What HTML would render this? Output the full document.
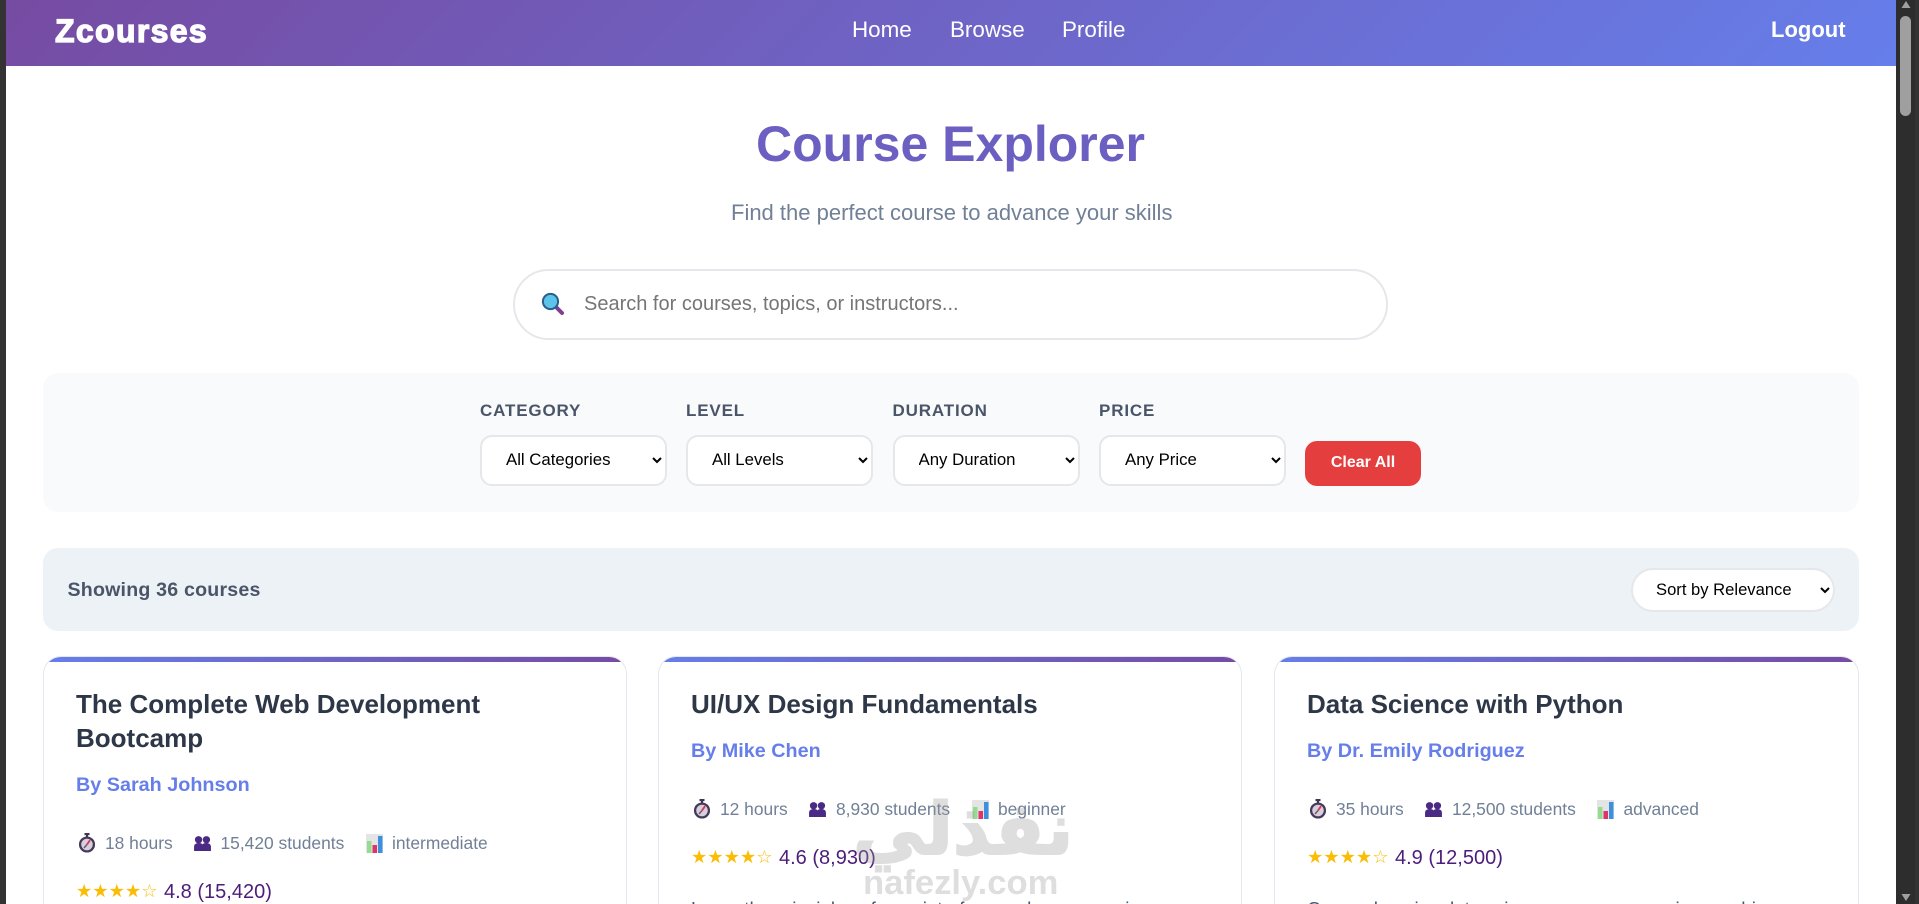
<!DOCTYPE html>
<html lang="en">
<head>
<meta charset="utf-8">
<title>Zcourses - Course Explorer</title>
<style>
html,body{margin:0;padding:0;width:1919px;height:904px;overflow:hidden;background:#fff}
*{box-sizing:border-box}
body{position:relative;font-family:"Liberation Sans",Arial,sans-serif}
.a{position:absolute;white-space:nowrap}
.bar{left:0;top:0;width:6px;height:904px;background:#333}
.track{left:1896px;top:0;width:23px;height:904px;background:#2d2d2d}
.thumb{left:1900px;top:16px;width:11px;height:100px;border-radius:6px;background:#9f9f9f}
header{position:absolute;left:6px;top:0;width:1890px;height:66px;background:linear-gradient(135deg,#764ba2 0%,#667eea 100%)}
.nav{color:#fff;font-size:22.4px;line-height:26px;top:17px}
h1{margin:0;left:756px;top:114px;font-size:50px;line-height:60px;font-weight:700;color:#6b5fc2}
.sub{left:731px;top:200px;font-size:22px;line-height:26px;color:#718096}
.search{left:513px;top:269px;width:875px;height:71px;border:2px solid #e5e7eb;border-radius:36px;background:#fff}
.search input{position:absolute;left:69px;top:0;width:780px;height:67px;border:0;outline:0;padding:0;background:transparent;font:20px "Liberation Sans",Arial,sans-serif;color:#000}
.search input::placeholder{color:#757575;opacity:1}
.panel{left:43px;top:373px;width:1816px;height:139px;background:#f8fafc;border-radius:15px}
.lbl{top:401px;font-size:17px;line-height:20px;font-weight:700;color:#4a5568;letter-spacing:.85px}
select{position:absolute;font:16.8px "Liberation Sans",Arial,sans-serif;color:#000;background:#fff;border:2px solid #e5e7eb;outline:0;padding:0 0 2px 20px;margin:0}
.f{top:435px;height:51px;width:187px;border-radius:12px}
.clear{left:1305px;top:441px;width:116px;height:45px;border:0;border-radius:12px;background:#e53e3e;color:#fff;font:700 16px "Liberation Sans",Arial,sans-serif;padding:0 0 2px}
.results{left:43px;top:548px;width:1816px;height:83px;background:#edf2f7;border-radius:15px}
.show{left:67.5px;top:578px;font-size:19.6px;line-height:24px;font-weight:700;color:#4a5568;letter-spacing:.2px}
.sort{left:1631px;top:568px;width:204px;height:44px;border-radius:22px;font-size:16.6px;padding:0 0 2px 19px}
.card{top:656px;width:584px;height:248px;background:#fff;border:1.5px solid #e2e8f0;border-bottom:0;border-radius:18px 18px 0 0;overflow:hidden}
.card:before{content:"";position:absolute;left:-2px;right:-2px;top:-2px;height:7px;background:linear-gradient(90deg,#667eea,#764ba2)}
.t{font-size:26px;line-height:34px;font-weight:700;color:#2d3748}
.by{font-size:19.8px;line-height:24px;font-weight:700;color:#667eea}
.m{font-size:17.4px;line-height:20px;color:#718096}
.st{font-family:"DejaVu Sans",sans-serif;font-size:18.2px;line-height:22px;color:#fbbc05}
.r{font-size:20px;line-height:24px;color:#4c1d7a}
.clip{top:894px;height:10px;width:520px;overflow:hidden}
.d{font-size:18.8px;line-height:30px;color:#4a5568}
svg{position:absolute;overflow:visible}
.wm{color:#9a9a9a;opacity:.32;font-weight:700}
</style>
</head>
<body>
<svg width="0" height="0" style="position:absolute"><defs>
<symbol id="sw" viewBox="0 0 16 20"><rect x="5.5" y="0" width="5" height="2.2" fill="#3f3550"/><rect x="7" y="1" width="2" height="3.5" fill="#3f3550"/><circle cx="8" cy="11.5" r="6.9" fill="#d9cfdc" stroke="#453a58" stroke-width="2.3"/><path d="M8 11.5L11 7.2" stroke="#d8365a" stroke-width="1.8"/><path d="M8 11.5L5 15" stroke="#6b5f78" stroke-width="1.6"/></symbol>
<symbol id="us" viewBox="0 0 18 16"><circle cx="4.8" cy="4" r="3.9" fill="#4a2a85"/><circle cx="13.2" cy="4" r="3.9" fill="#4a2a85"/><path d="M0 16V11.5C0 9 2 7.5 5 7.5c2 0 3.3.5 4 1.5.7-1 2-1.5 4-1.5 3 0 5 1.5 5 4V16z" fill="#4a2a85"/></symbol>
<symbol id="ch" viewBox="0 0 17 19"><rect width="17" height="19" fill="#e4e4e4"/><rect x="1" y="7" width="4.5" height="12" fill="#94dc8e"/><rect x="6.5" y="11" width="4.5" height="8" fill="#e0336b"/><rect x="12" y="2" width="4.5" height="17" fill="#3c90dd"/></symbol>
</defs></svg>

<div class="a bar"></div>
<div class="a track"></div>
<div class="a" style="left:1915px;top:0;width:4px;height:904px;background:#333"></div>
<div class="a thumb"></div>
<svg style="left:1901px;top:1px" width="10" height="8"><path d="M5 0L9.5 7H.5z" fill="#9f9f9f"/></svg>
<svg style="left:1901px;top:894px" width="10" height="8"><path d="M5 7L9.5 0H.5z" fill="#9f9f9f"/></svg>

<header></header>
<div class="a" style="left:55px;top:14px;color:#fff;font-size:32px;line-height:34px;font-weight:700;letter-spacing:1.35px;-webkit-text-stroke:1.3px #fff">Zcourses</div>
<div class="a nav" style="left:852px">Home</div>
<div class="a nav" style="left:950px">Browse</div>
<div class="a nav" style="left:1062px">Profile</div>
<div class="a nav" style="left:1771px;font-weight:700;font-size:22px">Logout</div>

<h1 class="a">Course Explorer</h1>
<div class="a sub">Find the perfect course to advance your skills</div>

<div class="a search"><input type="text" placeholder="Search for courses, topics, or instructors..."></div>
<svg style="left:541px;top:292px" width="25" height="24" viewBox="0 0 25 24"><path d="M15 15L21 21" stroke="#7f3f8f" stroke-width="4" stroke-linecap="round"/><circle cx="9.5" cy="9.5" r="7.6" fill="#5cc4ea" stroke="#2b5d8e" stroke-width="2"/></svg>

<div class="a panel"></div>
<div class="a lbl" style="left:480px">CATEGORY</div>
<div class="a lbl" style="left:686px">LEVEL</div>
<div class="a lbl" style="left:892.5px">DURATION</div>
<div class="a lbl" style="left:1099px">PRICE</div>
<select class="f" style="left:480px"><option>All Categories</option></select>
<select class="f" style="left:686px"><option>All Levels</option></select>
<select class="f" style="left:892.5px"><option>Any Duration</option></select>
<select class="f" style="left:1099px"><option>Any Price</option></select>
<button class="a clear">Clear All</button>

<div class="a results"></div>
<div class="a show">Showing 36 courses</div>
<select class="sort"><option>Sort by Relevance</option></select>

<!-- card 1 -->
<div class="a card" style="left:43px"></div>
<div class="a t" style="left:76px;top:687px">The Complete Web Development</div>
<div class="a t" style="left:76px;top:721px">Bootcamp</div>
<div class="a by" style="left:76px;top:773px">By Sarah Johnson</div>
<svg style="left:79px;top:833px" width="16" height="20"><use href="#sw"/></svg>
<div class="a m" style="left:105px;top:833px">18 hours</div>
<svg style="left:194px;top:836px" width="17" height="15"><use href="#us"/></svg>
<div class="a m" style="left:220.5px;top:833px">15,420 students</div>
<svg style="left:366px;top:834px" width="17" height="19"><use href="#ch"/></svg>
<div class="a m" style="left:392px;top:833px">intermediate</div>
<div class="a st" style="left:76px;top:881px">★★★★☆</div>
<div class="a r" style="left:164px;top:880px">4.8 (15,420)</div>

<!-- card 2 -->
<div class="a card" style="left:658px"></div>
<div class="a t" style="left:691px;top:687px">UI/UX Design Fundamentals</div>
<div class="a by" style="left:691px;top:739px">By Mike Chen</div>
<svg style="left:694px;top:799px" width="16" height="20"><use href="#sw"/></svg>
<div class="a m" style="left:720px;top:799px">12 hours</div>
<svg style="left:809px;top:802px" width="17" height="15"><use href="#us"/></svg>
<div class="a m" style="left:836px;top:799px">8,930 students</div>
<svg style="left:972px;top:800px" width="17" height="19"><use href="#ch"/></svg>
<div class="a m" style="left:998px;top:799px">beginner</div>
<div class="a st" style="left:691px;top:847px">★★★★☆</div>
<div class="a r" style="left:779px;top:846px">4.6 (8,930)</div>
<div class="a clip" style="left:691px"><div class="d">Learn the principles of user interface and user experience</div></div>

<!-- card 3 -->
<div class="a card" style="left:1274px;width:585px"></div>
<div class="a t" style="left:1307px;top:687px">Data Science with Python</div>
<div class="a by" style="left:1307px;top:739px">By Dr. Emily Rodriguez</div>
<svg style="left:1310px;top:799px" width="16" height="20"><use href="#sw"/></svg>
<div class="a m" style="left:1336px;top:799px">35 hours</div>
<svg style="left:1425px;top:802px" width="17" height="15"><use href="#us"/></svg>
<div class="a m" style="left:1452px;top:799px">12,500 students</div>
<svg style="left:1597px;top:800px" width="17" height="19"><use href="#ch"/></svg>
<div class="a m" style="left:1623.5px;top:799px">advanced</div>
<div class="a st" style="left:1307px;top:847px">★★★★☆</div>
<div class="a r" style="left:1395px;top:846px">4.9 (12,500)</div>
<div class="a clip" style="left:1307px"><div class="d">Comprehensive data science program covering machine</div></div>

<!-- watermark -->
<div class="a wm" style="left:853px;top:787px;width:212px;height:84px;text-align:center;font-family:'DejaVu Sans',sans-serif;font-size:72px;line-height:84px;-webkit-text-stroke:2px #9a9a9a">نفذلي</div>
<div class="a wm" style="left:863px;top:865px;height:39px;overflow:hidden;font-size:34.6px;line-height:36px">nafezly.com</div>
</body>
</html>
